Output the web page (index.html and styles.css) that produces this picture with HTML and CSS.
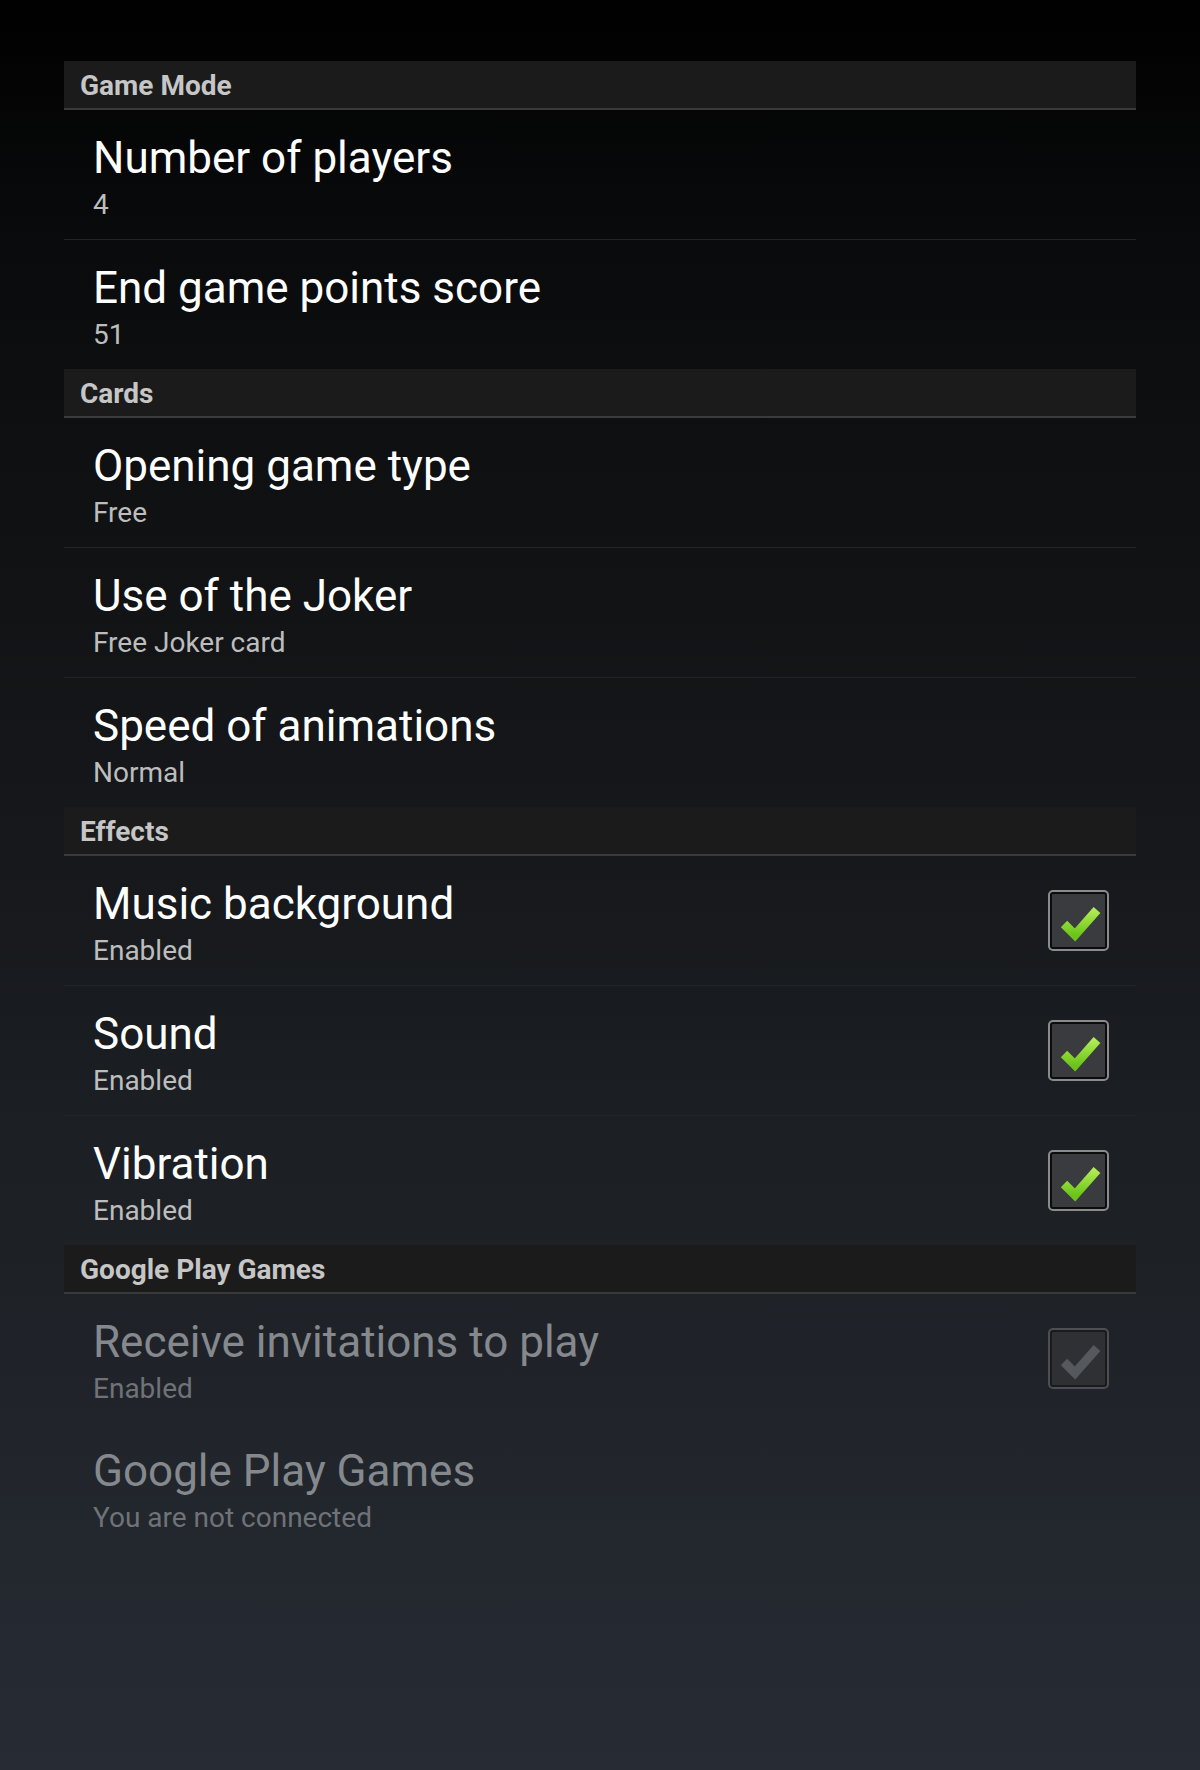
FILE: index.html
```html
<!DOCTYPE html>
<html lang="en">
<head>
<meta charset="utf-8">
<title>Settings</title>
<link rel="stylesheet" href="styles.css">
</head>
<body>
<svg width="0" height="0" class="defs" aria-hidden="true">
  <defs>
    <linearGradient id="green" x1="0" y1="0" x2="0" y2="1">
      <stop offset="0" stop-color="#b2ec55"/>
      <stop offset="1" stop-color="#6cc41a"/>
    </linearGradient>
  </defs>
</svg>
<main class="prefs">
  <section class="group">
    <h2 class="group-title">Game Mode</h2>
    <div class="pref"><div class="text"><div class="title">Number of players</div><div class="summary">4</div></div></div>
    <div class="pref"><div class="text"><div class="title">End game points score</div><div class="summary">51</div></div></div>
  </section>
  <section class="group">
    <h2 class="group-title">Cards</h2>
    <div class="pref"><div class="text"><div class="title">Opening game type</div><div class="summary">Free</div></div></div>
    <div class="pref"><div class="text"><div class="title">Use of the Joker</div><div class="summary">Free Joker card</div></div></div>
    <div class="pref"><div class="text"><div class="title">Speed of animations</div><div class="summary">Normal</div></div></div>
  </section>
  <section class="group">
    <h2 class="group-title">Effects</h2>
    <div class="pref"><div class="text"><div class="title">Music background</div><div class="summary">Enabled</div></div>
      <span class="check"><svg viewBox="0 0 53 53" width="53" height="53"><polyline points="12,30 23,41 45,16" fill="none" stroke="url(#green)" stroke-width="9" stroke-linejoin="miter"/></svg></span></div>
    <div class="pref"><div class="text"><div class="title">Sound</div><div class="summary">Enabled</div></div>
      <span class="check"><svg viewBox="0 0 53 53" width="53" height="53"><polyline points="12,30 23,41 45,16" fill="none" stroke="url(#green)" stroke-width="9" stroke-linejoin="miter"/></svg></span></div>
    <div class="pref"><div class="text"><div class="title">Vibration</div><div class="summary">Enabled</div></div>
      <span class="check"><svg viewBox="0 0 53 53" width="53" height="53"><polyline points="12,30 23,41 45,16" fill="none" stroke="url(#green)" stroke-width="9" stroke-linejoin="miter"/></svg></span></div>
  </section>
  <section class="group disabled">
    <h2 class="group-title">Google Play Games</h2>
    <div class="pref plain"><div class="text"><div class="title">Receive invitations to play</div><div class="summary">Enabled</div></div>
      <span class="check off"><svg viewBox="0 0 53 53" width="53" height="53"><polyline points="12,30 23,41 45,16" fill="none" stroke="#55585c" stroke-width="9" stroke-linejoin="miter"/></svg></span></div>
    <div class="pref plain"><div class="text"><div class="title">Google Play Games</div><div class="summary">You are not connected</div></div></div>
  </section>
</main>
</body>
</html>
```

FILE: styles.css
```css
html, body {
  margin: 0;
  padding: 0;
}

body {
  width: 1200px;
  min-height: 1770px;
  font-family: Roboto, "Liberation Sans", sans-serif;
  background: linear-gradient(to bottom,
    #000000 0px,
    #030303 60px,
    #0a0b0d 250px,
    #0f1113 500px,
    #15171a 800px,
    #1b1e22 1100px,
    #20242a 1400px,
    #272b34 1770px);
  background-repeat: no-repeat;
  background-size: 1200px 1770px;
}

.defs {
  position: absolute;
  width: 0;
  height: 0;
}

.prefs {
  padding: 61px 64px 0 64px;
}

.group-title {
  margin: 0;
  padding: 2px 0 0 16px;
  background: #1b1b1b;
  border-bottom: 2px solid #3a3a3a;
  height: 45px;
  line-height: 45px;
  font-size: 28px;
  font-weight: 700;
  color: #c6c6c6;
}

.pref {
  display: flex;
  align-items: center;
  height: 129px;
  padding: 0 29px 0 29px;
  border-top: 1px solid #222528;
}

.group-title + .pref,
.pref.plain {
  border-top: none;
}

.text {
  flex: 1;
  padding-top: 4px;
}

.title {
  font-size: 44px;
  line-height: 52px;
  color: #ffffff;
}

.summary {
  margin-top: 5px;
  font-size: 28px;
  line-height: 32px;
  color: #bdbdbd;
}

.disabled .title {
  color: #85898d;
}

.disabled .summary {
  color: #6f7377;
}

.check {
  width: 53px;
  height: 53px;
  border: 2px solid #0c0c0d;
  outline: 2px solid #8a8b8d;
  border-radius: 3px;
  background: #3a3b3f;
  display: flex;
}

.check.off {
  background: #2e3034;
  border-color: #1a1b1d;
  outline-color: #4c4e52;
}
```
